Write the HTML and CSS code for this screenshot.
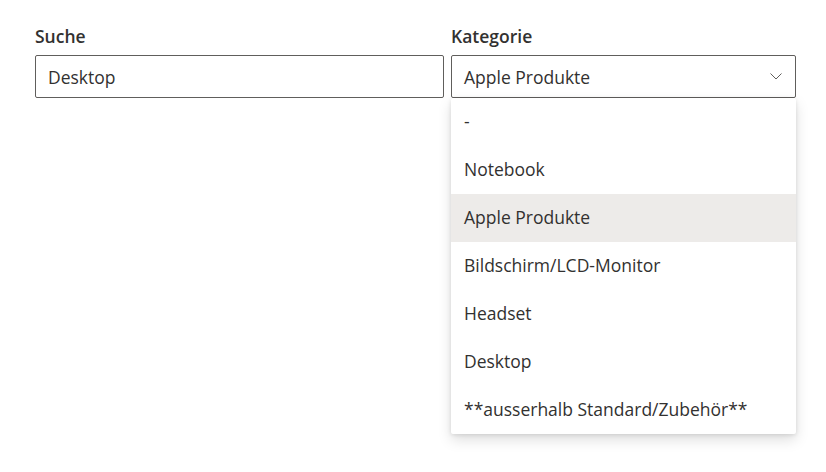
FILE: index.html
```html
<!DOCTYPE html>
<html lang="de">
<head>
  <meta charset="UTF-8" />
  <title>Suche</title>
  <link rel="stylesheet" href="styles.css">
</head>
<body>
  <div class="filters">
    <div class="field">
      <label for="searchInput">Suche</label>
      <input type="text" id="searchInput" value="Desktop">
    </div>

    <div class="field">
      <label>Kategorie</label>
      <div class="dropdown">
        <div class="dropdown-title">
          <span>Apple Produkte</span>
          <svg class="chevron" width="12" height="7" viewBox="0 0 12 7">
            <path d="M0.5 0.5 L6 6 L11.5 0.5" fill="none" stroke="#605e5c" stroke-width="1"/>
          </svg>
        </div>
        <ul class="dropdown-list">
          <li>-</li>
          <li>Notebook</li>
          <li class="selected">Apple Produkte</li>
          <li>Bildschirm/LCD-Monitor</li>
          <li>Headset</li>
          <li>Desktop</li>
          <li>**ausserhalb Standard/Zubehör**</li>
        </ul>
      </div>
    </div>
  </div>
</body>
</html>
```

FILE: styles.css
```css
* {
  box-sizing: border-box;
  margin: 0;
  padding: 0;
}

html, body {
  min-height: 100vh;
}

body {
  font-family: "Open Sans", "Noto Sans", Arial, sans-serif;
  color: #323130;
  background: white;
  padding: 25px 35px;
}

.filters {
  display: grid;
  grid-template-columns: 409px 345px;
  gap: 7px;
}

label {
  display: block;
  font-size: 17.5px;
  font-weight: 600;
  line-height: 20px;
  padding: 1px 0 9px;
}

input {
  width: 100%;
  height: 43px;
  padding: 0 12px;
  font-family: inherit;
  font-size: 17.5px;
  color: #323130;
  border: 1px solid #605e5c;
  border-radius: 2px;
  outline: none;
}

.dropdown {
  position: relative;
}

.dropdown-title {
  display: flex;
  align-items: center;
  justify-content: space-between;
  height: 43px;
  padding: 0 13px 0 12px;
  font-size: 17.5px;
  border: 1px solid #605e5c;
  border-radius: 2px;
}

.dropdown-list {
  position: absolute;
  top: 43px;
  left: 0;
  right: 0;
  list-style: none;
  background: white;
  border-radius: 2px;
  box-shadow: 0 6px 14px rgba(0,0,0,0.13), 0 1px 4px rgba(0,0,0,0.11);
}

.dropdown-list li {
  height: 48px;
  line-height: 46px;
  padding: 0 13px;
  font-size: 17.5px;
  white-space: nowrap;
}

.dropdown-list li.selected {
  background: #edebe9;
}
```
